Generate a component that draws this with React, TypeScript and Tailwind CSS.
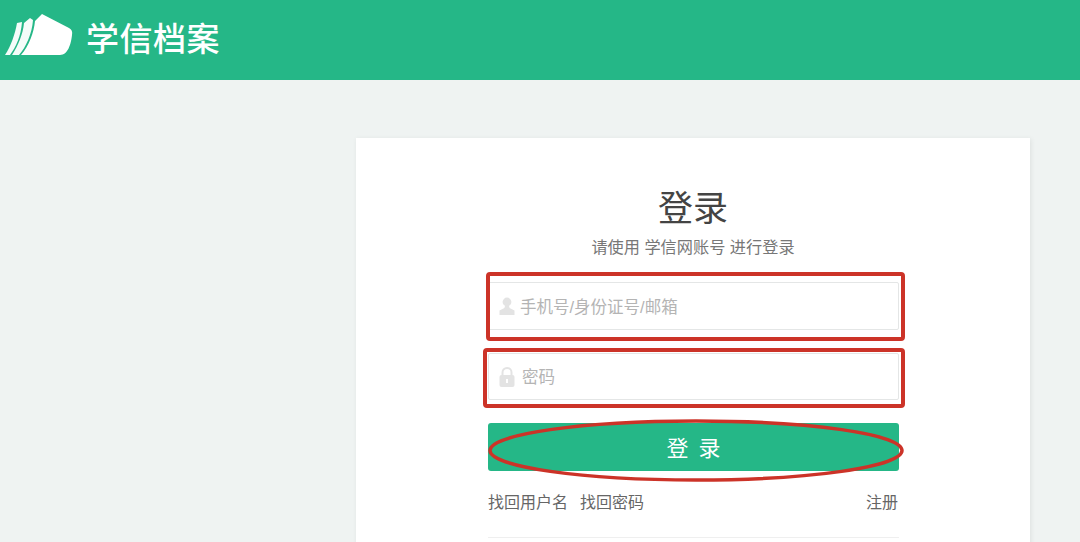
import React from 'react';

const cjk = 'font-["Liberation_Sans","Noto_Sans_CJK_SC",sans-serif]';

function Logo() {
  return (
    <svg width="70" height="42" viewBox="0 0 70 42" className="shrink-0 mt-[-11px]">
      {/* three pages fanned out */}
      <path d="M1 41 C7 32 11 20 13 9 L18 8 C17 22 12 33 6 41 Z" fill="#fff" opacity="0.95" />
      <path d="M8 41 C14 32 19 20 20 9 L26 4 L29 6 C28 20 22 33 15 41 Z" fill="#fff" opacity="0.95" />
      <path d="M17 41 C25 32 30 18 31 7 L38 0 L65 14 Q69 16 68 21 C67 30 64 41 56 41 Z" fill="#fff" />
    </svg>
  );
}

function UserIcon() {
  return (
    <svg width="16" height="18" viewBox="0 0 16 18">
      <circle cx="8" cy="5" r="4.4" fill="#e3e3e3" />
      <path d="M6 9 L10 9 L10.6 11 L15.5 13.5 L15.5 18 L0.5 18 L0.5 13.5 L5.4 11 Z" fill="#e3e3e3" />
    </svg>
  );
}

function LockIcon() {
  return (
    <svg width="16" height="20" viewBox="0 0 16 20">
      <path d="M3.5 9 V5.5 a4.5 4.5 0 0 1 9 0 V9" fill="none" stroke="#e3e3e3" strokeWidth="2" />
      <rect x="0.5" y="8" width="15" height="12" rx="2" fill="#e3e3e3" />
      <rect x="7" y="12" width="2" height="4" fill="#fff" />
    </svg>
  );
}

function Field({ icon, label, className, labelClass }: { icon: React.ReactNode; label: string; className: string; labelClass: string }) {
  return (
    <div className={`flex items-center border border-[#e4e6e6] rounded-[2px] bg-white pl-[10px] ${className}`}>
      <span className="w-[16px] flex justify-center">{icon}</span>
      <span className={`text-[16.5px] text-[#b4b4b4] ${labelClass}`}>{label}</span>
    </div>
  );
}

export default function App() {
  return (
    <div className={`relative w-[1080px] h-[542px] overflow-hidden bg-[#eff3f2] ${cjk}`}>
      <header className="h-[80px] bg-[#25b787] flex items-center pl-[4px] gap-[13px]">
        <Logo />
        <span className="text-[33px] leading-none font-medium text-white tracking-[0.5px] mt-[-1px] ml-[-1px]">学信档案</span>
      </header>

      <div className="pt-[58px] pl-[356px]">
        <div className="w-[674px] h-[420px] bg-white shadow-[1px_1px_5px_rgba(0,0,0,0.08)] px-[132px] pt-[46px] box-border">
          <h1 className="text-[35px] leading-[50px] text-[#444] text-center font-normal">登录</h1>
          <p className="text-[16.2px] leading-[24px] text-[#777] text-center mt-[1px]">请使用 学信网账号 进行登录</p>
          <div className="mt-[23px] flex flex-col w-[411px]">
            <Field icon={<UserIcon />} label="手机号/身份证号/邮箱" className="h-[48px]" labelClass="ml-[5px] pt-[3px]" />
            <Field icon={<LockIcon />} label="密码" className="h-[47px] mt-[23px]" labelClass="ml-[7px] pt-[2px]" />
            <button className="mt-[23px] h-[48px] w-full rounded-[3px] bg-[#25b787] text-white text-[22px] tracking-[10px] pl-[10px] pt-[3px]">登录</button>
            <div className="flex justify-between text-[16px] text-[#666] mt-[21px] leading-[22px]">
              <div className="flex gap-[12px]">
                <span>找回用户名</span>
                <span>找回密码</span>
              </div>
              <span className="mr-[1px]">注册</span>
            </div>
            <div className="mt-[23px] h-px bg-[#efefef]" />
          </div>
        </div>
      </div>

      {/* red annotations drawn on top of the screenshot */}
      <div className="absolute left-[486px] top-[272px] w-[419px] h-[69px] border-[4px] border-[#cc3328] rounded-[4px]" />
      <div className="absolute left-[483px] top-[348px] w-[422px] h-[60px] border-[4px] border-[#cc3328] rounded-[4px]" />
      <svg className="absolute left-[480px] top-[415px]" width="432" height="70" viewBox="0 0 432 70">
        <ellipse cx="216" cy="35.5" rx="206" ry="29.5" fill="none" stroke="#cc3328" strokeWidth="3.5" />
      </svg>
    </div>
  );
}
